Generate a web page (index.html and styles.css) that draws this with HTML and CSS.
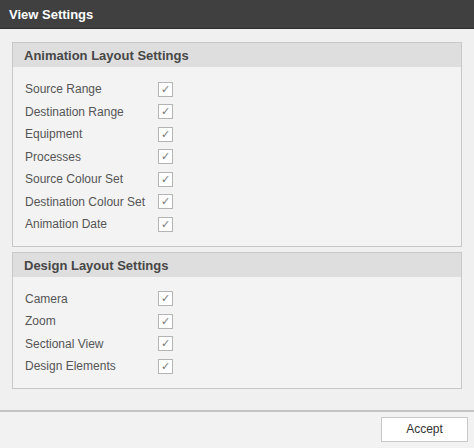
FILE: index.html
```html
<!DOCTYPE html>
<html lang="en">
<head>
    <meta charset="UTF-8">
    <title>View Settings</title>
    <link rel="stylesheet" href="styles.css">
</head>
<body>
    <div class="dlg">
        <div class="dlg_title">View Settings</div>
        <div class="dlg_body">
            <div class="group">
                <div class="group_head">Animation Layout Settings</div>
                <ul class="opts">
                    <li><span>Source Range</span><i class="chk">&#10003;</i></li>
                    <li><span>Destination Range</span><i class="chk">&#10003;</i></li>
                    <li><span>Equipment</span><i class="chk">&#10003;</i></li>
                    <li><span>Processes</span><i class="chk">&#10003;</i></li>
                    <li><span>Source Colour Set</span><i class="chk">&#10003;</i></li>
                    <li><span>Destination Colour Set</span><i class="chk">&#10003;</i></li>
                    <li><span>Animation Date</span><i class="chk">&#10003;</i></li>
                </ul>
            </div>
            <div class="group">
                <div class="group_head">Design Layout Settings</div>
                <ul class="opts">
                    <li><span>Camera</span><i class="chk">&#10003;</i></li>
                    <li><span>Zoom</span><i class="chk">&#10003;</i></li>
                    <li><span>Sectional View</span><i class="chk">&#10003;</i></li>
                    <li><span>Design Elements</span><i class="chk">&#10003;</i></li>
                </ul>
            </div>
        </div>
        <div class="dlg_foot">
            <a href="#" class="btn">Accept</a>
        </div>
    </div>
</body>
</html>
```

FILE: styles.css
```css
*{margin:0; padding:0; box-sizing:border-box;}
li{list-style:none;}
a{text-decoration:none;}
body{width:474px; height:448px; overflow:hidden; background:#f0f0f0; font-family:"Liberation Sans", Arial, sans-serif; font-size:12px; color:#555;}
.dlg{display:flex; flex-direction:column; height:448px;}
.dlg_title{height:29px; padding:7px 0 0 9px; background:#404040; border-bottom:1px solid #2e2e2e; color:#fff; font-weight:bold; font-size:13px;}
.dlg_body{flex:1; padding:13px 12px 0 12px; display:flex; flex-direction:column; gap:5px;}
.group{border:1px solid #c8c8c8; background:#f3f3f3;}
.group_head{height:24px; padding:5px 0 0 11px; background:#dedede; color:#474747; font-weight:bold; font-size:13px;}
.opts{padding:11px 0 10px 12px;}
.opts li{display:flex; align-items:center; height:22.5px;}
.opts li span{width:133px;}
.chk{display:flex; align-items:center; justify-content:center; width:15px; height:15px; border:1px solid #b4b4b4; background:#fff; color:#777; font-style:normal; font-size:11px;}
.dlg_foot{height:38px; border-top:2px solid #c4c4c4; background:#f2f2f2; display:flex; justify-content:flex-end; padding:5px 6px 0 0;}
.btn{display:block; width:87px; height:25px; border:1px solid #c8c8c8; background:#fff; color:#333; text-align:center; line-height:23px; font-size:12px;}
```
